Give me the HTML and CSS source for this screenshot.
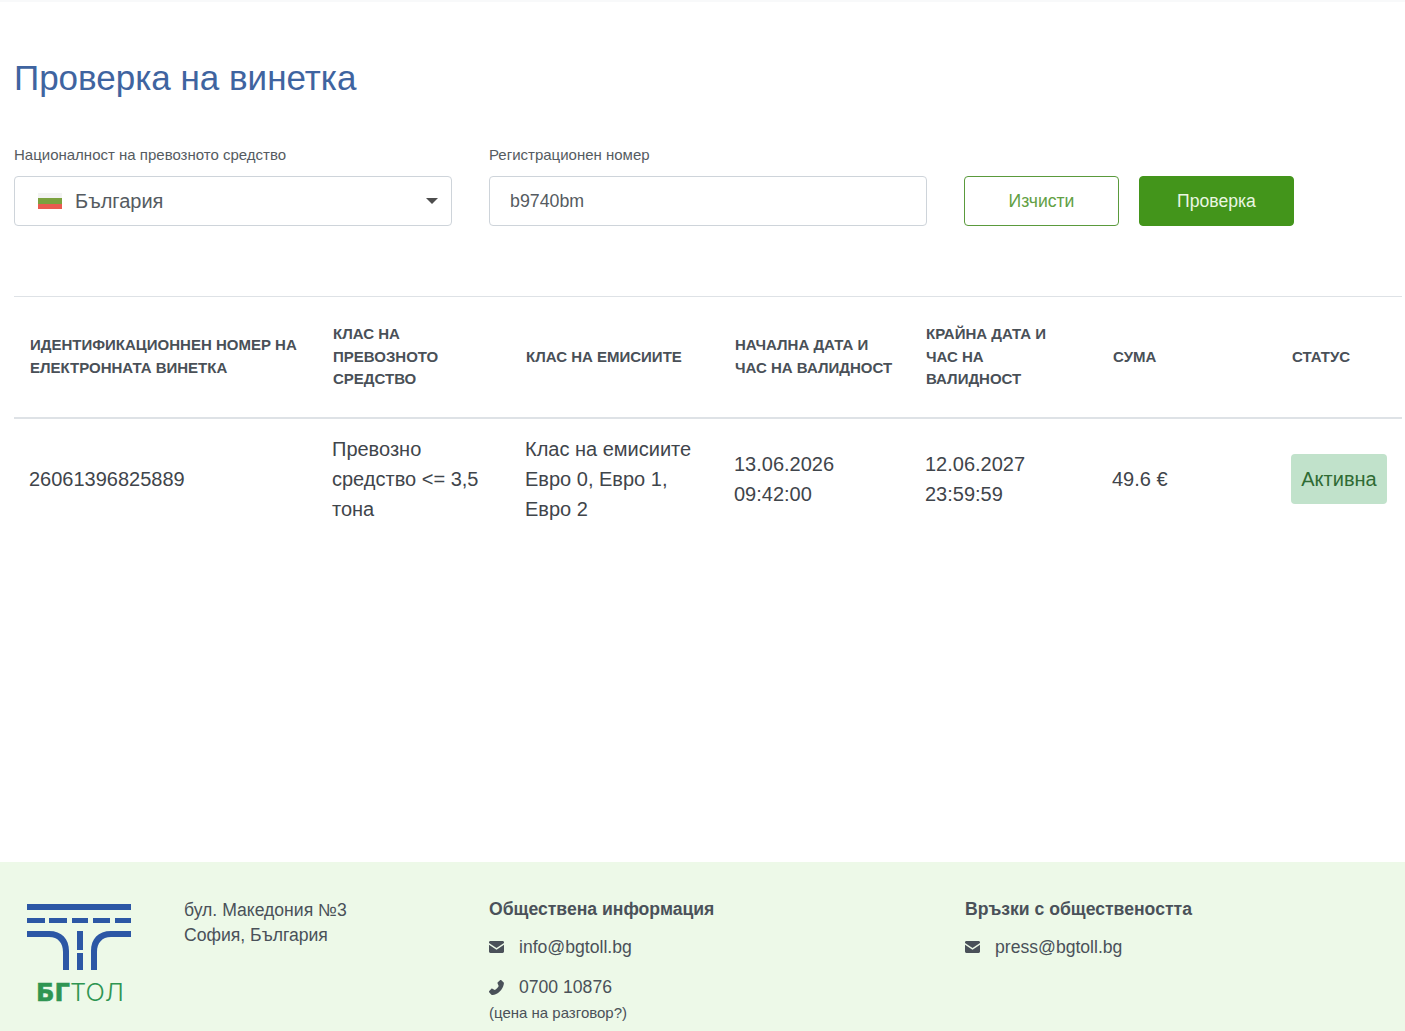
FILE: index.html
```html
<!DOCTYPE html>
<html lang="bg">
<head>
    <meta charset="UTF-8">
    <meta name="viewport" content="width=device-width, initial-scale=1.0">
    <title>Проверка на винетка</title>

    <link rel="stylesheet" href="styles.css">
</head>
<body>

<main class="content">
    <h1 class="title">Проверка на винетка</h1>

    <form class="search">
        <div class="field">
            <label class="field__label">Националност на превозното средство</label>
            <div class="select">
                <span class="flag"><i class="flag__white"></i><i class="flag__green"></i><i class="flag__red"></i></span>
                <span class="select__text">България</span>
                <span class="select__arrow"></span>
            </div>
        </div>
        <div class="field">
            <label class="field__label">Регистрационен номер</label>
            <div class="input">b9740bm</div>
        </div>
        <div class="search__buttons">
            <button type="button" class="btn btn-outline">Изчисти</button>
            <button type="button" class="btn btn-solid">Проверка</button>
        </div>
    </form>

    <table class="results">
        <thead>
            <tr>
                <th class="col-id">Идентификационнен номер на електронната винетка</th>
                <th class="col-class">Клас на превозното средство</th>
                <th class="col-emission">Клас на емисиите</th>
                <th class="col-start">Начална дата и час на валидност</th>
                <th class="col-end">Крайна дата и час на валидност</th>
                <th class="col-sum">Сума</th>
                <th class="col-status">Статус</th>
            </tr>
        </thead>
        <tbody>
            <tr>
                <td>26061396825889</td>
                <td>Превозно средство &lt;= 3,5 тона</td>
                <td>Клас на емисиите Евро 0, Евро 1, Евро 2</td>
                <td>13.06.2026<br>09:42:00</td>
                <td>12.06.2027<br>23:59:59</td>
                <td>49.6 €</td>
                <td><span class="badge">Активна</span></td>
            </tr>
        </tbody>
    </table>
</main>

<footer class="footer">
    <div class="footer__logo">
        <svg class="logo" width="106" height="106" viewBox="0 0 106 106">
            <g fill="#2c57a5">
                <rect x="0" y="2" width="104" height="6"/>
                <rect x="0" y="16" width="18" height="5"/>
                <rect x="22" y="16" width="18" height="5"/>
                <rect x="45" y="16" width="16" height="5"/>
                <rect x="66" y="16" width="17" height="5"/>
                <rect x="88" y="16" width="16" height="5"/>
                <rect x="50" y="29" width="6" height="19"/>
                <rect x="50" y="51" width="6" height="17"/>
                <path d="M0 29h22c13 0 20 8 20 20v19h-6V50c0-9-5-15-14-15H0z"/>
                <path d="M104 29H84c-13 0-20 8-20 20v19h6V50c0-9 5-15 14-15h20z"/>
            </g>
            <text class="logo__bold" x="9" y="99" textLength="34" lengthAdjust="spacingAndGlyphs">БГ</text>
            <text class="logo__light" x="43" y="99" textLength="54" lengthAdjust="spacingAndGlyphs">ТОЛ</text>
        </svg>
    </div>
    <div class="footer__address">
        бул. Македония №3<br>София, България
    </div>
    <div class="footer__info">
        <h4 class="footer__title">Обществена информация</h4>
        <p class="contact">
            <svg class="contact__icon" width="15" height="12" viewBox="0 0 15 12"><path fill="#4a5159" d="M1.400 0h12.200C14.400 0 15 .6 15 1.400v.5L7.500 7 0 1.900v-.5C0 .6.6 0 1.400 0zM0 3.700l7.500 5 7.500-5v6.900c0 .8-.6 1.400-1.400 1.400H1.400C.6 12 0 11.400 0 10.600z"/></svg>
            info@bgtoll.bg
        </p>
        <p class="contact contact--phone">
            <svg class="contact__icon" width="15" height="15" viewBox="0 0 15 15"><path fill="#4a5159" d="M14.900 2.900c0 1.100-.3 2.800-1.500 5-1.500 2.700-3.600 4.800-6.200 6.100-1.300.7-2.600 1-3.700 1-.5 0-1-.3-1.300-.6L.3 12.400c-.4-.4-.4-.9-.1-1.300l2-2.200c.3-.3.800-.4 1.200-.2l2.400 1.200c1.700-.9 3-2.300 3.900-4L8.600 3.500c-.2-.4-.1-.9.200-1.200L11 .3c.4-.4 1-.4 1.400 0l2 2c.3.100.5.300.5.600z"/></svg>
            0700 10876
        </p>
        <p class="contact__note">(цена на разговор?)</p>
    </div>
    <div class="footer__press">
        <h4 class="footer__title">Връзки с обществеността</h4>
        <p class="contact">
            <svg class="contact__icon" width="15" height="12" viewBox="0 0 15 12"><path fill="#4a5159" d="M1.400 0h12.200C14.400 0 15 .6 15 1.400v.5L7.500 7 0 1.900v-.5C0 .6.6 0 1.400 0zM0 3.700l7.500 5 7.500-5v6.900c0 .8-.6 1.400-1.400 1.400H1.400C.6 12 0 11.400 0 10.600z"/></svg>
            press@bgtoll.bg
        </p>
    </div>
</footer>

</body>
</html>
```

FILE: styles.css
```css
*,
*::before,
*::after {
  box-sizing: border-box;
}

body {
  margin: 0;
  font-family: "Liberation Sans", Arial, sans-serif;
  color: #495057;
  background: white;
  min-height: 1031px;
  display: flex;
  flex-direction: column;
  border-top: 2px solid #f8f9fa;
}

.content {
  flex: 1;
  padding: 0 3px 0 14px;
}

.title {
  margin: 56px 0 0;
  font-size: 35px;
  line-height: 40px;
  font-weight: 400;
  color: #3f64a0;
}

/* search form */
.search {
  display: flex;
  align-items: flex-end;
  margin-top: 47px;
}

.field {
  width: 438px;
  margin-right: 37px;
}

.field__label {
  display: block;
  font-size: 15px;
  line-height: 20px;
  margin-bottom: 11px;
  color: #555b61;
}

.select,
.input {
  height: 50px;
  border: 1px solid #ced4da;
  border-radius: 4px;
  font-size: 17.8px;
  color: #555b61;
  display: flex;
  align-items: center;
}

.select {
  padding: 0 13px 0 23px;
  font-size: 20px;
}

.input {
  padding-left: 20px;
}

.flag {
  width: 24px;
  height: 16px;
  display: flex;
  flex-direction: column;
  margin-right: 13px;
}

.flag i {
  flex: 1;
}

.flag__white {
  background: #f3f3f3;
}

.flag__green {
  background: #7ba23f;
}

.flag__red {
  background: #ea5b50;
}

.select__text {
  flex: 1;
}

.select__arrow {
  width: 0;
  height: 0;
  border-left: 6px solid transparent;
  border-right: 6px solid transparent;
  border-top: 6px solid #4d4d4d;
}

.search__buttons {
  display: flex;
  gap: 20px;
}

.btn {
  width: 155px;
  height: 50px;
  border-radius: 4px;
  font-family: inherit;
  font-size: 17.6px;
  cursor: pointer;
}

.btn-outline {
  background: white;
  color: #62a044;
  border: 1px solid #5a9a3c;
}

.btn-solid {
  background: #43951b;
  border: 1px solid #43951b;
  color: #eaf7e2;
}

/* results */
.results {
  width: 1388px;
  table-layout: fixed;
  border-collapse: collapse;
  margin-top: 70px;
}

.results th {
  height: 121px;
  padding: 0 16px;
  border-top: 1px solid #dee2e6;
  border-bottom: 2px solid #dee2e6;
  text-align: left;
  font-size: 15px;
  line-height: 22.5px;
  font-weight: 700;
  text-transform: uppercase;
  color: #495057;
}

.results td {
  height: 122px;
  padding: 0 15px;
  font-size: 20px;
  line-height: 30px;
  color: #3f454b;
}

.col-id {
  width: 303px;
}

.col-class {
  width: 193px;
}

.col-emission {
  width: 209px;
}

.col-start {
  width: 191px;
}

.col-end {
  width: 187px;
}

.col-sum {
  width: 179px;
}

.col-status {
  width: 126px;
}

.badge {
  display: inline-block;
  width: 96px;
  height: 50px;
  line-height: 50px;
  text-align: center;
  border-radius: 4px;
  background: #c1e2cb;
  color: #2f6b34;
}

/* footer */
.footer {
  display: flex;
  height: 169px;
  background: #edf9e8;
  color: #4a5159;
}

.footer__logo {
  width: 184px;
  padding: 40px 0 0 27px;
}

.logo {
  display: block;
}

.logo__bold {
  font-family: "DejaVu Sans", sans-serif;
  font-weight: 700;
  font-size: 24px;
  fill: #2f9552;
  stroke: #2f9552;
  stroke-width: 0.5px;
}

.logo__light {
  font-family: Inter, sans-serif;
  font-weight: 300;
  font-size: 24px;
  fill: #2f9552;
}

.footer__address {
  width: 305px;
  padding-top: 36px;
  font-size: 17.6px;
  line-height: 25px;
}

.footer__info {
  width: 476px;
  padding-top: 36px;
}

.footer__press {
  padding-top: 36px;
}

.footer__title {
  margin: 0 0 16px;
  font-size: 17.6px;
  line-height: 22px;
  font-weight: 700;
}

.contact {
  display: flex;
  align-items: center;
  margin: 0;
  height: 22px;
  font-size: 17.6px;
}

.contact--phone {
  margin-top: 18px;
}

.contact__icon {
  margin-right: 15px;
}

.contact__note {
  margin: 6px 0 0;
  font-size: 15px;
  line-height: 18px;
}
```
